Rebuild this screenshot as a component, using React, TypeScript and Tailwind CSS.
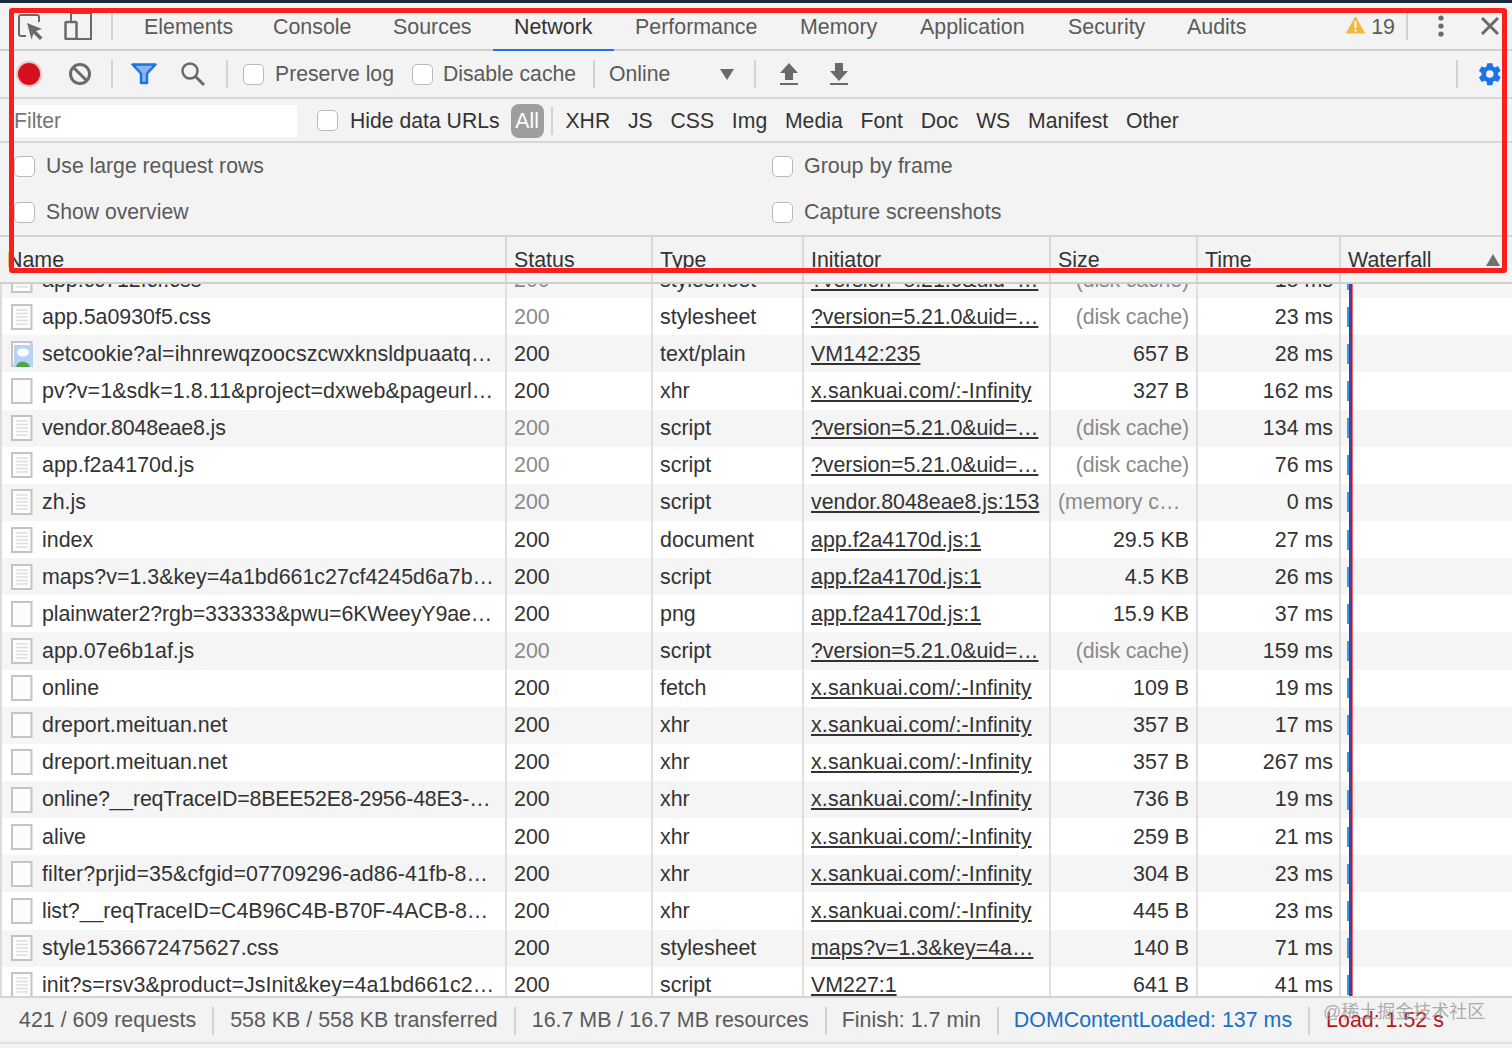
import React from "react";

type Row = { n: string; s: string; t: string; i: string; z: string; m: string; ic: "doc" | "blank" | "img"; g?: boolean; u?: boolean; tr?: string };
const sx = "x.sankuai.com/:-Infinity";
const ver = "?version=5.21.0&uid=…";
const rows: Row[] = [
  { n: "app.cc712fcf.css", s: "200", t: "stylesheet", i: ver, z: "(disk cache)", m: "15 ms", ic: "doc", g: true },
  { n: "app.5a0930f5.css", s: "200", t: "stylesheet", i: ver, z: "(disk cache)", m: "23 ms", ic: "doc", g: true },
  { n: "setcookie?al=ihnrewqzoocszcwxknsldpuaatq…", s: "200", t: "text/plain", i: "VM142:235", z: "657 B", m: "28 ms", ic: "img", tr: "tracking-[0.1px]" },
  { n: "pv?v=1&sdk=1.8.11&project=dxweb&pageurl…", s: "200", t: "xhr", i: sx, z: "327 B", m: "162 ms", ic: "blank", tr: "tracking-[0.1px]" },
  { n: "vendor.8048eae8.js", s: "200", t: "script", i: ver, z: "(disk cache)", m: "134 ms", ic: "doc", g: true, tr: "tracking-[-0.17px]" },
  { n: "app.f2a4170d.js", s: "200", t: "script", i: ver, z: "(disk cache)", m: "76 ms", ic: "doc", g: true },
  { n: "zh.js", s: "200", t: "script", i: "vendor.8048eae8.js:153", z: "(memory c…", m: "0 ms", ic: "doc", g: true, u: true },
  { n: "index", s: "200", t: "document", i: "app.f2a4170d.js:1", z: "29.5 KB", m: "27 ms", ic: "doc" },
  { n: "maps?v=1.3&key=4a1bd661c27cf4245d6a7b…", s: "200", t: "script", i: "app.f2a4170d.js:1", z: "4.5 KB", m: "26 ms", ic: "doc" },
  { n: "plainwater2?rgb=333333&pwu=6KWeeyY9ae…", s: "200", t: "png", i: "app.f2a4170d.js:1", z: "15.9 KB", m: "37 ms", ic: "blank", tr: "tracking-[-0.1px]" },
  { n: "app.07e6b1af.js", s: "200", t: "script", i: ver, z: "(disk cache)", m: "159 ms", ic: "doc", g: true },
  { n: "online", s: "200", t: "fetch", i: sx, z: "109 B", m: "19 ms", ic: "blank" },
  { n: "dreport.meituan.net", s: "200", t: "xhr", i: sx, z: "357 B", m: "17 ms", ic: "blank" },
  { n: "dreport.meituan.net", s: "200", t: "xhr", i: sx, z: "357 B", m: "267 ms", ic: "blank" },
  { n: "online?__reqTraceID=8BEE52E8-2956-48E3-…", s: "200", t: "xhr", i: sx, z: "736 B", m: "19 ms", ic: "blank", tr: "tracking-[-0.2px]" },
  { n: "alive", s: "200", t: "xhr", i: sx, z: "259 B", m: "21 ms", ic: "blank" },
  { n: "filter?prjid=35&cfgid=07709296-ad86-41fb-8…", s: "200", t: "xhr", i: sx, z: "304 B", m: "23 ms", ic: "blank", tr: "tracking-[0.14px]" },
  { n: "list?__reqTraceID=C4B96C4B-B70F-4ACB-8…", s: "200", t: "xhr", i: sx, z: "445 B", m: "23 ms", ic: "blank", tr: "tracking-[-0.08px]" },
  { n: "style1536672475627.css", s: "200", t: "stylesheet", i: "maps?v=1.3&key=4a…", z: "140 B", m: "71 ms", ic: "doc" },
  { n: "init?s=rsv3&product=JsInit&key=4a1bd661c2…", s: "200", t: "script", i: "VM227:1", z: "641 B", m: "41 ms", ic: "doc", tr: "tracking-[0.05px]" },
];

const FileIcon = ({ k }: { k: Row["ic"] }) => (
  <svg width="22" height="26" viewBox="0 0 22 26" className="shrink-0">
    <rect x="1" y="1" width="19.500" height="24" fill="#fcfcfc" stroke="#c4c4c4" strokeWidth="2" />
    {k === "doc" && (
      <g stroke="#dedede" strokeWidth="1.500">
        <path d="M5 6h12M5 9.500h12M5 13h12M5 16.500h12M5 20h12" />
      </g>
    )}
    {k === "img" && (
      <g>
        <rect x="3" y="4" width="19" height="22" fill="#b9d2f3" />
        <ellipse cx="12" cy="11.500" rx="6" ry="4" fill="#fff" />
        <path d="M5 26c1-7 12-7 14 0z" fill="#4ca64c" />
      </g>
    )}
  </svg>
);

const Check = () => <span className="block w-[21px] h-[21px] rounded-[5px] border border-[#b9b9b9] bg-white shrink-0" />;
const VLine = ({ c = "" }: { c?: string }) => <span className={`block w-[2px] h-[28px] bg-[#d2d2d2] shrink-0 ${c}`} />;

const tabs = [
  { t: "Elements", w: "w-[129px]" },
  { t: "Console", w: "w-[120px]" },
  { t: "Sources", w: "w-[121px]" },
  { t: "Network", w: "w-[121px]" },
  { t: "Performance", w: "w-[165px]" },
  { t: "Memory", w: "w-[120px]" },
  { t: "Application", w: "w-[148px]" },
  { t: "Security", w: "w-[119px]" },
  { t: "Audits", w: "w-[100px]" },
];
const chips = ["XHR", "JS", "CSS", "Img", "Media", "Font", "Doc", "WS", "Manifest", "Other"];

export default function App() {
  return (
    <div className="relative w-[1512px] h-[1048px] overflow-hidden bg-[#f3f3f3] text-[21.4px] text-[#333] flex flex-col" style={{ fontFamily: '"Liberation Sans", Arial, sans-serif' }}>
      <div className="h-[3px] bg-[#17283f] shrink-0" />
      {/* tab bar */}
      <div className="h-[48px] shrink-0 flex items-center border-b-2 border-[#d0d0d0] text-[#5a5a5a] relative">
        <svg width="26" height="26" viewBox="0 0 26 26" className="ml-[18px] mt-[1px] shrink-0">
          <path d="M8 22H3a2 2 0 0 1-2-2V3a2 2 0 0 1 2-2h16a2 2 0 0 1 2 2v5" fill="none" stroke="#6a6a6a" strokeWidth="2" />
          <path d="M9 9l15 6-6 2 6.500 6.500-2.500 2.500-6.500-6.500-2 6z" fill="#6a6a6a" />
        </svg>
        <svg width="28" height="28" viewBox="0 0 28 28" className="ml-[20px] shrink-0">
          <path d="M7 9V1h20v26H13" fill="none" stroke="#6a6a6a" strokeWidth="2" />
          <rect x="1.500" y="10" width="11" height="17" rx="1" fill="none" stroke="#6a6a6a" strokeWidth="2.500" />
        </svg>
        <VLine c="ml-[19px]" />
        <div className="flex items-center h-full ml-[10px]">
          {tabs.map(({ t, w }) => (
            <div key={t} className={`${w} pl-[21px] h-full flex items-center relative pt-[2px] ${t === "Network" ? "text-[#333]" : ""}`}>
              {t}
              {t === "Network" && <span className="absolute left-0 right-0 -bottom-[2px] h-[2px] bg-[#1a73e8]" />}
            </div>
          ))}
        </div>
        <div className="ml-auto flex items-center h-full">
          <svg width="19" height="18" viewBox="0 0 19 18" className="mb-[3px]"><path d="M9.500 1 L18.500 17 H0.500Z" fill="#f4b73e" stroke="#f4b73e" strokeLinejoin="round" /><rect x="8.500" y="5" width="2" height="7" fill="#fff" /><rect x="8.500" y="13.500" width="2" height="2" fill="#fff" /></svg>
          <span className="ml-[6px] mr-[11px] pt-[2px]">19</span>
          <VLine />
          <svg width="8" height="24" viewBox="0 0 8 24" className="ml-[29px]"><circle cx="4" cy="4" r="2.600" fill="#6a6a6a" /><circle cx="4" cy="12" r="2.600" fill="#6a6a6a" /><circle cx="4" cy="20" r="2.600" fill="#6a6a6a" /></svg>
          <svg width="18" height="18" viewBox="0 0 18 18" className="ml-[36px] mr-[13px]"><path d="M1 1l16 16M17 1L1 17" stroke="#6a6a6a" strokeWidth="3" /></svg>
        </div>
      </div>
      {/* toolbar */}
      <div className="h-[48px] shrink-0 flex items-center border-b-2 border-[#d8d8d8] text-[#5a5a5a] text-[21.2px]">
        <span className="block w-[22px] h-[22px] ml-[18px] rounded-full bg-[#d50f1c] shadow-[0_0_0_2px_#eec4c4] shrink-0" />
        <svg width="24" height="24" viewBox="0 0 24 24" className="ml-[28px] shrink-0"><circle cx="12" cy="12" r="9.500" fill="none" stroke="#6a6a6a" strokeWidth="3" /><path d="M5 5l14 14" stroke="#6a6a6a" strokeWidth="3" /></svg>
        <VLine c="ml-[19px]" />
        <svg width="26" height="22" viewBox="0 0 26 22" className="ml-[18px] shrink-0"><path d="M1.500 1.500h23l-8.500 9v9.500h-6v-9.500z" fill="#8ab4ee" stroke="#1a73e8" strokeWidth="2.500" strokeLinejoin="round" /></svg>
        <svg width="26" height="26" viewBox="0 0 26 26" className="ml-[23px] shrink-0"><circle cx="10" cy="10" r="7.500" fill="none" stroke="#6a6a6a" strokeWidth="2.500" /><path d="M15.500 15.500L24 24" stroke="#6a6a6a" strokeWidth="3" /></svg>
        <VLine c="ml-[20px]" />
        <span className="ml-[15px]"><Check /></span>
        <span className="ml-[11px]">Preserve log</span>
        <span className="ml-[18px]"><Check /></span>
        <span className="ml-[10px]">Disable cache</span>
        <VLine c="ml-[17px]" />
        <span className="ml-[14px]">Online</span>
        <svg width="14" height="12" viewBox="0 0 14 12" className="ml-[50px] shrink-0"><path d="M0 1h14L7 12z" fill="#6a6a6a" /></svg>
        <VLine c="ml-[20px]" />
        <svg width="20" height="24" viewBox="0 0 20 24" className="ml-[23px] shrink-0"><path d="M10 1l9 10h-5v7H6v-7H1zM1 21h18v2H1z" fill="#6a6a6a" /></svg>
        <svg width="20" height="24" viewBox="0 0 20 24" className="ml-[30px] shrink-0"><path d="M6 1h8v8h5l-9 10L1 9h5zM1 21h18v2H1z" fill="#6a6a6a" /></svg>
        <VLine c="ml-auto" />
        <svg width="26" height="26" viewBox="0 0 24 24" className="ml-[19px] mr-[9px] shrink-0"><path fill="#1a73e8" fillRule="evenodd" d="M19.400 13c.04-.33.06-.66.06-1s-.02-.67-.06-1l2.150-1.680a.5.5 0 0 0 .12-.64l-2.040-3.530a.5.5 0 0 0-.62-.22l-2.540 1.020a7.400 7.400 0 0 0-1.730-1l-.38-2.700A.5.5 0 0 0 13.860 2H9.780a.5.5 0 0 0-.5.430l-.38 2.700c-.62.260-1.200.6-1.730 1L4.630 5.110a.5.500 0 0 0-.62.220L1.970 8.860a.5.5 0 0 0 .12.640L4.240 11.180c-.04.330-.07.670-.07 1s.03.670.07 1l-2.150 1.680a.5.5 0 0 0-.12.640l2.040 3.530c.12.220.380.300.62.220l2.540-1.020c.53.400 1.110.740 1.730 1l.38 2.700c.05.240.26.430.5.430h4.080c.25 0 .46-.19.500-.43l.38-2.700c.62-.26 1.200-.6 1.730-1l2.540 1.020c.24.080.5 0 .62-.22l2.040-3.530a.5.5 0 0 0-.12-.64zM11.820 15.500a3.500 3.500 0 1 1 0-7 3.500 3.500 0 0 1 0 7z" /></svg>
      </div>
      {/* filter row */}
      <div className="h-[44px] shrink-0 flex items-center border-b-2 border-[#d8d8d8] text-[21.2px] pt-[1px]">
        <div className="ml-[14px] w-[283px] h-[32px] bg-white text-[#757575] flex items-center">Filter</div>
        <span className="ml-[20px]"><Check /></span>
        <span className="ml-[12px]">Hide data URLs</span>
        <span className="ml-[11px] w-[33px] h-[34px] rounded-[8px] bg-[#9e9e9e] text-white flex items-center justify-center">All</span>
        <span className="block w-[2px] h-[28px] bg-[#d2d2d2] ml-[7px] shrink-0" />
        <div className="flex items-center ml-[4px]">
          {chips.map((c) => (
            <span key={c} className="px-[8.900px]">{c}</span>
          ))}
        </div>
      </div>
      {/* settings */}
      <div className="h-[94px] shrink-0 grid grid-cols-[772px_1fr] grid-rows-2 border-b-2 border-[#d4d4d4] text-[#5a5a5a]">
        {["Use large request rows", "Group by frame", "Show overview", "Capture screenshots"].map((t, i) => (
          <div key={t} className={`flex items-center gap-[11px] ${i % 2 ? "" : "pl-[14px] text-[21.2px]"}`}>
            <Check />
            {t}
          </div>
        ))}
      </div>
      {/* table header */}
      <div className="h-[47px] shrink-0 grid grid-cols-[507px_146px_151px_247px_147px_143px_1fr] border-b-2 border-[#d0d0d0]">
        {["Name", "Status", "Type", "Initiator", "Size", "Time", "Waterfall"].map((h, i) => (
          <div key={h} className="relative flex items-end pb-[10px] pl-[7px] leading-[24px] border-r-2 border-[#d8d8d8] last:border-r-0">
            {h}
            {i === 6 && (
              <svg width="14" height="12" viewBox="0 0 14 12" className="absolute right-[12px] bottom-[16px]"><path d="M0 12h14L7 0z" fill="#707070" /></svg>
            )}
          </div>
        ))}
      </div>
      {/* rows */}
      <div className="flex-1 min-h-0 overflow-hidden relative bg-white border-l-2 border-[#dcdcdc]">
        <div className="-mt-[23px]">
          {rows.map((r, idx) => (
            <div key={idx} className={`h-[37.150px] grid grid-cols-[505px_146px_151px_247px_147px_143px_1fr] items-stretch ${idx % 2 === 0 ? "bg-[#f5f5f5]" : "bg-white"}`}>
              <div className="flex items-center pl-[9px] gap-[9px] border-r-2 border-[#e0e0e0] overflow-hidden whitespace-nowrap pr-[8px]">
                <FileIcon k={r.ic} />
                <span className={`overflow-hidden ${r.tr ?? ""}`}>{r.n}</span>
              </div>
              <div className={`flex items-center pl-[7px] border-r-2 border-[#e0e0e0] ${r.g ? "text-[#8a8a8a]" : ""}`}>{r.s}</div>
              <div className="flex items-center pl-[7px] border-r-2 border-[#e0e0e0]">{r.t}</div>
              <div className={`flex items-center pl-[7px] border-r-2 border-[#e0e0e0] underline whitespace-nowrap overflow-hidden ${r.i === sx ? "tracking-[0.13px]" : ""} ${r.i === ver ? "tracking-[-0.1px]" : ""}`}>{r.i}</div>
              <div className={`flex items-center border-r-2 border-[#e0e0e0] whitespace-nowrap ${r.u ? "pl-[7px] justify-start text-[#8a8a8a]" : "justify-end pr-[7px]"} ${r.g && !r.u ? "text-[#8a8a8a] tracking-[-0.17px]" : ""}`}>{r.z}</div>
              <div className="flex items-center justify-end pr-[6px] border-r-2 border-[#e0e0e0]">{r.m}</div>
              <div className="flex items-stretch pl-[6px]">
                <span className="block w-[2px] h-[20px] self-center bg-[#3b9bea]" />
                <span className="block w-[3px] bg-[#4b3f8f]" />
                <span className="block w-[1px] bg-[#ee6a70]" />
              </div>
            </div>
          ))}
        </div>
      </div>
      {/* status bar */}
      <div className="h-[52px] shrink-0 border-t-2 border-[#d4d4d4] text-[#5a5a5a] flex flex-col">
        <div className="h-[46px] flex items-center border-b-2 border-[#e0e0e0] pl-[19px] pt-[1px]">
          <span>421 / 609 requests</span>
          <VLine c="ml-[16px]" />
          <span className="ml-[16px]">558 KB / 558 KB transferred</span>
          <VLine c="ml-[16px]" />
          <span className="ml-[16px]">16.7 MB / 16.7 MB resources</span>
          <VLine c="ml-[16px]" />
          <span className="ml-[15px]">Finish: 1.7 min</span>
          <VLine c="ml-[16px]" />
          <span className="ml-[15px] text-[#1a6fc4]">DOMContentLoaded: 137 ms</span>
          <VLine c="ml-[16px]" />
          <span className="ml-[16px] text-[#b4161b]">Load: 1.52 s</span>
        </div>
      </div>
      {/* annotation frame */}
      <div className="absolute left-[9px] top-[8px] w-[1498px] h-[265px] border-[5px] border-[#fb1f1b] rounded-[3px] pointer-events-none" />
      {/* watermark */}
      <div className="absolute left-[1323px] top-[999px] text-[18px] text-[#9a9a9a]/80 whitespace-nowrap" style={{ fontFamily: '"Liberation Sans", "Noto Sans CJK SC", sans-serif' }}>@稀土掘金技术社区</div>
    </div>
  );
}
